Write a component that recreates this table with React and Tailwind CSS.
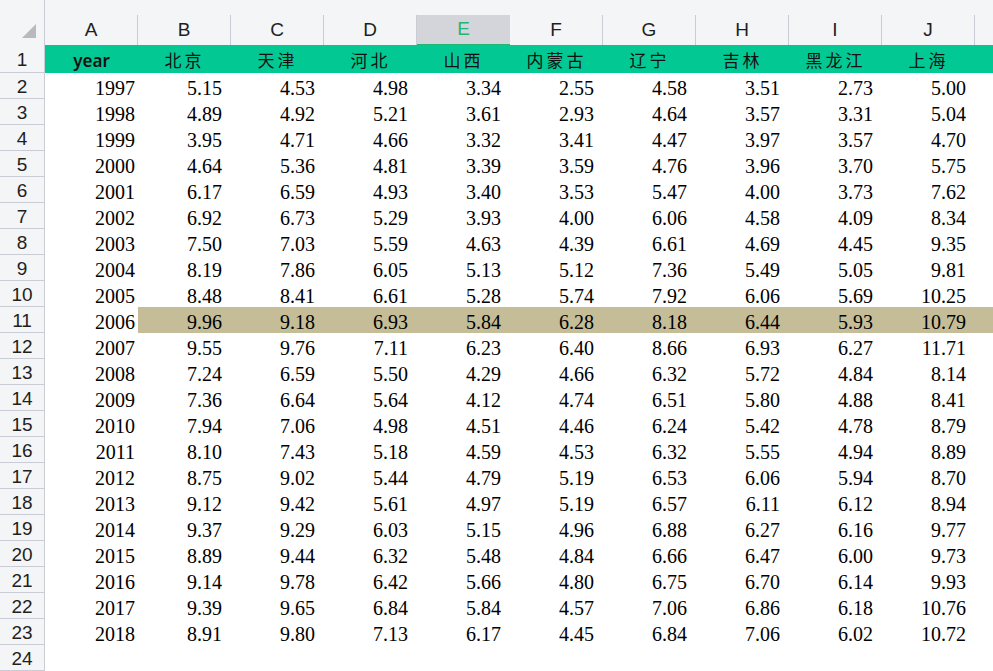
import React from "react";

const cols = ["A", "B", "C", "D", "E", "F", "G", "H", "I", "J"];
const provinces = ["北京", "天津", "河北", "山西", "内蒙古", "辽宁", "吉林", "黑龙江", "上海"];

const data = [
  [1997, "5.15", "4.53", "4.98", "3.34", "2.55", "4.58", "3.51", "2.73", "5.00"],
  [1998, "4.89", "4.92", "5.21", "3.61", "2.93", "4.64", "3.57", "3.31", "5.04"],
  [1999, "3.95", "4.71", "4.66", "3.32", "3.41", "4.47", "3.97", "3.57", "4.70"],
  [2000, "4.64", "5.36", "4.81", "3.39", "3.59", "4.76", "3.96", "3.70", "5.75"],
  [2001, "6.17", "6.59", "4.93", "3.40", "3.53", "5.47", "4.00", "3.73", "7.62"],
  [2002, "6.92", "6.73", "5.29", "3.93", "4.00", "6.06", "4.58", "4.09", "8.34"],
  [2003, "7.50", "7.03", "5.59", "4.63", "4.39", "6.61", "4.69", "4.45", "9.35"],
  [2004, "8.19", "7.86", "6.05", "5.13", "5.12", "7.36", "5.49", "5.05", "9.81"],
  [2005, "8.48", "8.41", "6.61", "5.28", "5.74", "7.92", "6.06", "5.69", "10.25"],
  [2006, "9.96", "9.18", "6.93", "5.84", "6.28", "8.18", "6.44", "5.93", "10.79"],
  [2007, "9.55", "9.76", "7.11", "6.23", "6.40", "8.66", "6.93", "6.27", "11.71"],
  [2008, "7.24", "6.59", "5.50", "4.29", "4.66", "6.32", "5.72", "4.84", "8.14"],
  [2009, "7.36", "6.64", "5.64", "4.12", "4.74", "6.51", "5.80", "4.88", "8.41"],
  [2010, "7.94", "7.06", "4.98", "4.51", "4.46", "6.24", "5.42", "4.78", "8.79"],
  [2011, "8.10", "7.43", "5.18", "4.59", "4.53", "6.32", "5.55", "4.94", "8.89"],
  [2012, "8.75", "9.02", "5.44", "4.79", "5.19", "6.53", "6.06", "5.94", "8.70"],
  [2013, "9.12", "9.42", "5.61", "4.97", "5.19", "6.57", "6.11", "6.12", "8.94"],
  [2014, "9.37", "9.29", "6.03", "5.15", "4.96", "6.88", "6.27", "6.16", "9.77"],
  [2015, "8.89", "9.44", "6.32", "5.48", "4.84", "6.66", "6.47", "6.00", "9.73"],
  [2016, "9.14", "9.78", "6.42", "5.66", "4.80", "6.75", "6.70", "6.14", "9.93"],
  [2017, "9.39", "9.65", "6.84", "5.84", "4.57", "7.06", "6.86", "6.18", "10.76"],
  [2018, "8.91", "9.80", "7.13", "6.17", "4.45", "6.84", "7.06", "6.02", "10.72"],
];

const grid = "grid grid-cols-[45px_repeat(10,93px)_1fr]";
const sans = "font-['Liberation_Sans','Noto_Sans',sans-serif]";
const serif = "font-['Liberation_Serif','Noto_Sans_CJK_SC',serif]";

const RowHead = ({ n, tall }) => (
  <div
    className={`${tall ? "h-[28px]" : "h-[26px]"} bg-[#f4f5f7] border-r border-b border-[#c9ccd4] flex items-center justify-center pt-[3px] text-[19px] text-[#1f1f1f] ${sans}`}
  >
    {n}
  </div>
);

export default function App() {
  return (
    <div className="w-[993px] h-[671px] overflow-hidden bg-white">
      {/* column letters */}
      <div className={`${grid} h-[45px] bg-[#f4f5f7]`}>
        <div className="border-r border-b border-[#c9ccd4] flex items-end justify-end pr-[8px] pb-[7px]">
          <svg width="14" height="14" viewBox="0 0 14 14">
            <polygon points="14,0 14,14 0,14" fill="#b8babf" />
          </svg>
        </div>
        {cols.map((c) => {
          const active = c === "E";
          return (
            <div key={c} className="flex flex-col border-b border-[#c9ccd4]">
              <div className="h-[15px]" />
              <div
                className={`flex-1 flex items-center justify-center text-[19px] ${sans} ${
                  active
                    ? "bg-[#d3d5db] text-[#22b573] border-b-2 border-[#22b573] -mb-px"
                    : "text-[#1f1f1f] border-r border-[#c9ccd4]"
                }`}
              >
                {c}
              </div>
            </div>
          );
        })}
        <div className="border-b border-[#c9ccd4]" />
      </div>

      {/* row 1 */}
      <div className={grid}>
        <RowHead n={1} tall />
        <div className="h-[28px] bg-[#02c994] flex items-center justify-center pt-[4px] text-[17px] font-semibold text-[#111] font-['Noto_Sans','Liberation_Sans',sans-serif]">
          year
        </div>
        {provinces.map((p) => (
          <div
            key={p}
            className="h-[28px] bg-[#02c994] flex items-center justify-center pt-[2px] text-[17px] tracking-[3px] text-[#111] font-['Noto_Sans_CJK_SC',serif]"
          >
            {p}
          </div>
        ))}
        <div className="h-[28px] bg-[#02c994]" />
      </div>

      {/* data rows */}
      {data.map((row, i) => {
        const hl = row[0] === 2006;
        return (
          <div key={row[0]} className={grid}>
            <RowHead n={i + 2} />
            <div className={`h-[26px] flex items-center justify-end pr-[3px] pt-[3px] text-[20px] text-black ${serif}`}>
              {row[0]}
            </div>
            {row.slice(1).map((v, j) => (
              <div
                key={j}
                className={`h-[26px] flex items-center justify-end pr-[9px] pt-[3px] text-[20px] text-black ${serif} ${
                  hl ? "bg-[#c4bd97]" : ""
                }`}
              >
                {v}
              </div>
            ))}
            <div className={`h-[26px] ${hl ? "bg-[#c4bd97]" : ""}`} />
          </div>
        );
      })}

      <div className={grid}>
        <RowHead n={24} />
      </div>
    </div>
  );
}
